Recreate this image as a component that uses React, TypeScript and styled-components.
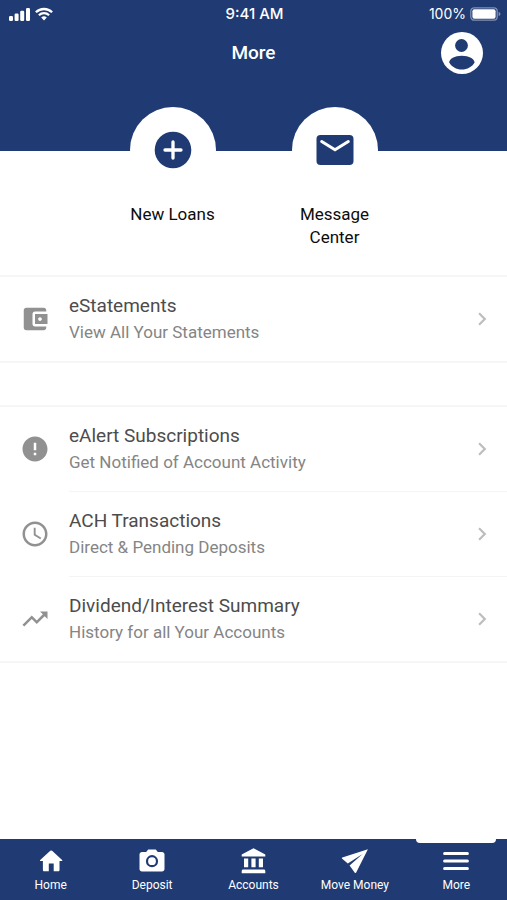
import React from "react";
import styled, { createGlobalStyle } from "styled-components";

const navy = "#203b73";

const GlobalStyle = createGlobalStyle`
  *, *::before, *::after { box-sizing: border-box; }
  body { margin: 0; background: #fff; font-family: Roboto, "Liberation Sans", sans-serif; }
  button { border: 0; padding: 0; background: none; font: inherit; color: inherit; cursor: pointer; }
  a { color: inherit; text-decoration: none; }
  h1, p { margin: 0; }
  ul { margin: 0; padding: 0; list-style: none; }
  svg { display: block; flex: none; }
`;

const Screen = styled.div`
  min-height: 100vh;
  display: flex;
  flex-direction: column;
`;

const Header = styled.header`
  background: ${navy};
  color: #fff;
  padding-bottom: 73px;
`;

const StatusBar = styled.div`
  display: grid;
  grid-template-columns: 1fr auto 1fr;
  align-items: center;
  height: 27px;
  padding: 0 6px 0 8px;
  font-family: Inter, sans-serif;
  font-size: 14px;
`;

const StatusGroup = styled.div<{ $end?: boolean }>`
  display: flex;
  align-items: center;
  gap: 4px;
  justify-content: ${(p) => (p.$end ? "flex-end" : "flex-start")};
`;

const Clock = styled.time`
  font-size: 15px;
  font-weight: 500;
`;

const TitleBar = styled.div`
  display: grid;
  grid-template-columns: 1fr auto 1fr;
  align-items: center;
  height: 51px;
  padding: 0 24px;
`;

const Title = styled.h1`
  grid-column: 2;
  font-size: 19px;
  line-height: 24px;
  font-weight: 500;
`;

const ProfileButton = styled.button`
  justify-self: end;
  border-radius: 50%;
`;

const Content = styled.main`
  flex: 1;
  padding-bottom: 24px;
`;

const Shortcuts = styled.nav`
  display: flex;
  justify-content: center;
  gap: 60px;
  margin-top: -44px;
  margin-bottom: 26px;
`;

const Shortcut = styled.a`
  width: 102px;
  display: flex;
  flex-direction: column;
  align-items: center;
  gap: 10px;
  color: #0c0c0c;
  font-size: 17px;
  line-height: 23px;
  text-align: center;
`;

const Disc = styled.span`
  display: grid;
  place-items: center;
  width: 86px;
  height: 86px;
  border-radius: 50%;
  background: #fff;
  color: ${navy};
`;

const List = styled.ul`
  border-top: 2px solid #f6f6f6;
  border-bottom: 2px solid #f6f6f6;

  & + & { margin-top: 42px; }
`;

const Row = styled.a`
  display: flex;
  align-items: center;
  padding-left: 20px;
  color: #919191;
`;

const RowBody = styled.span`
  flex: 1;
  display: flex;
  align-items: center;
  justify-content: space-between;
  margin-left: 19px;
  padding: 16px 12px 16px 0;

  li + li & { border-top: 1px solid #f4f4f4; }
`;

const RowText = styled.span`
  display: flex;
  flex-direction: column;
`;

const RowTitle = styled.span`
  font-size: 19px;
  line-height: 26px;
  color: #4c4c4c;
`;

const RowDetail = styled.span`
  font-size: 17px;
  line-height: 26px;
  color: #858585;
`;

const TabBar = styled.nav`
  display: grid;
  grid-template-columns: repeat(5, 1fr);
  background: ${navy};
  color: #fff;
`;

const Tab = styled.a`
  position: relative;
  display: flex;
  flex-direction: column;
  align-items: center;
  gap: 2px;
  padding: 8px 0 7px;
  font-size: 12px;
  line-height: 16px;

  &[aria-current="page"]::before {
    content: "";
    position: absolute;
    top: 0;
    width: 80px;
    height: 4px;
    border-radius: 0 0 4px 4px;
    background: #fff;
  }
`;

const SignalIcon = () => (
  <svg width="23" height="14" viewBox="0 0 23 14" fill="currentColor" aria-hidden="true">
    <rect x="1" y="9" width="4" height="5" rx="1.2" />
    <rect x="6.6" y="6.5" width="4" height="7.5" rx="1.2" />
    <rect x="12.2" y="3.8" width="4" height="10.2" rx="1.2" />
    <rect x="18" y="1" width="4" height="13" rx="1.2" />
  </svg>
);

const WifiIcon = () => (
  <svg width="18" height="14" viewBox="0 0 18 14" fill="none" stroke="currentColor" strokeWidth="2.3" aria-hidden="true">
    <path d="M.9 5.3a11.6 11.6 0 0 1 16.2 0" />
    <path d="M3.9 8.3a7.3 7.3 0 0 1 10.2 0" />
    <path d="M6.2 10.6a4 4 0 0 1 5.6 0L9 13.6z" fill="currentColor" stroke="none" />
  </svg>
);

const BatteryIcon = () => (
  <svg width="31" height="14" viewBox="0 0 31 14" aria-hidden="true">
    <rect x=".8" y=".8" width="26.4" height="12.4" rx="3.4" fill="none" stroke="#8290b0" strokeWidth="1.3" />
    <rect x="2.4" y="2.2" width="23.2" height="9.6" rx="2" fill="#fff" />
    <path d="M28.6 5v4c1.2-.4 1.8-1.1 1.8-2s-.6-1.6-1.8-2z" fill="#8290b0" />
  </svg>
);

const ProfileIcon = () => (
  <svg width="42" height="42" viewBox="0 0 42 42" aria-hidden="true">
    <circle cx="21" cy="21" r="21" fill="#fff" />
    <circle cx="20.5" cy="13.5" r="6.4" fill={navy} />
    <path d="M8.2 30.6C8.2 26.8 13.600 23.8 20.8 23.8s12.800 3 12.800 6.800c-2.400 4.300-7.200 7-12.800 7s-10.200-2.700-12.600-7z" fill={navy} />
  </svg>
);

const PlusIcon = () => (
  <svg width="38" height="38" viewBox="0 0 38 38" aria-hidden="true">
    <circle cx="19" cy="19" r="18.3" fill="currentColor" />
    <path d="M19 11v16M11 19h16" stroke="#fff" strokeWidth="3.3" strokeLinecap="round" />
  </svg>
);

const MailIcon = () => (
  <svg width="38" height="30" viewBox="0 0 38 30" aria-hidden="true">
    <rect x=".5" width="37" height="30" rx="4" fill="currentColor" />
    <path d="M5.700 6.500 19 14.800l13.300-8.300" fill="none" stroke="#fff" strokeWidth="3" strokeLinecap="round" />
  </svg>
);

const paths = {
  wallet:
    "M21 18v1c0 1.100-.9 2-2 2H5c-1.110 0-2-.9-2-2V5c0-1.100.89-2 2-2h14c1.100 0 2 .9 2 2v1h-9c-1.110 0-2 .9-2 2v8c0 1.100.89 2 2 2h9zm-9-2h10V8H12v8zm4-2.500c-.83 0-1.500-.67-1.500-1.500s.67-1.500 1.500-1.500 1.500.67 1.500 1.500-.67 1.500-1.500 1.500z",
  alert:
    "M12 2C6.480 2 2 6.480 2 12s4.480 10 10 10 10-4.480 10-10S17.520 2 12 2zm1 15h-2v-2h2v2zm0-4h-2V7h2v6z",
  clock:
    "M11.990 2C6.470 2 2 6.480 2 12s4.470 10 9.990 10C17.520 22 22 17.520 22 12S17.520 2 11.990 2zM12 20c-4.420 0-8-3.580-8-8s3.580-8 8-8 8 3.580 8 8-3.580 8-8 8zm.5-13H11v6l5.250 3.150.75-1.230-4.500-2.670z",
  trend:
    "M16 6l2.290 2.290-4.880 4.880-4-4L2 16.590 3.410 18l6-6 4 4 6.300-6.290L22 12V6z",
  chevron: "M8.590 16.590 13.170 12 8.590 7.410 10 6l6 6-6 6z",
};

const Glyph = ({ name, size = 30 }: { name: keyof typeof paths; size?: number }) => (
  <svg width={size} height={size} viewBox="0 0 24 24" fill="currentColor" aria-hidden="true">
    <path d={paths[name]} />
  </svg>
);

const Chevron = styled.span`
  color: #bdbdbd;
`;

const TabIcon = ({ children }: { children: React.ReactNode }) => (
  <svg width="28" height="28" viewBox="0 0 28 28" fill="currentColor" aria-hidden="true">
    {children}
  </svg>
);

const tabs = [
  {
    label: "Home",
    icon: <path d="M13.300 3.800a1.400 1.400 0 0 1 1.800 0l10 9.300c.4.500.2 1-.4 1h-2.200v8.800c0 .8-.5 1.300-1.300 1.300h-4.500v-7.600h-4.900v7.600H7.200c-.8 0-1.300-.5-1.300-1.300v-8.800H3.600c-.6 0-.8-.5-.4-1z" />,
  },
  {
    label: "Deposit",
    icon: (
      <>
        <path d="M10.200 2.500h7.600l2 2.600h4.200c1.400 0 2.500 1 2.500 2.400v14.600c0 1.400-1.100 2.400-2.500 2.400H4c-1.400 0-2.500-1-2.500-2.400V7.500C1.500 6.100 2.600 5.100 4 5.100h4.200z" />
        <circle cx="14" cy="14.2" r="5" fill="none" stroke={navy} strokeWidth="2.2" />
      </>
    ),
  },
  {
    label: "Accounts",
    icon: <path d="M14.500 1.300 26.300 7.400v2.200H2.700V7.400zM5 11.600h4.200v8.600H5zM12.400 11.600h4.200v8.600h-4.200zM19.800 11.600H24v8.600h-4.200zM4.200 22.400h20.600c.9 0 1.500.6 1.500 1.500v2.400H2.700v-2.400c0-.9.600-1.500 1.500-1.500z" />,
  },
  {
    label: "Move Money",
    icon: <path d="M26.900 2.300 1.300 10.500c-.5.200-.6.900-.1 1.300l5.600 4.700L21.600 7 8.600 18.500l5.200 7.200c.4.500 1.100.5 1.400-.1z" />,
  },
  {
    label: "More",
    icon: <path d="M2.600 6.500h22.800M2.600 14h22.800M2.600 21.500h22.800" stroke="currentColor" strokeWidth="3" strokeLinecap="round" />,
  },
];

type Item = { icon: keyof typeof paths; title: string; detail: string };

const groups: Item[][] = [
  [{ icon: "wallet", title: "eStatements", detail: "View All Your Statements" }],
  [
    { icon: "alert", title: "eAlert Subscriptions", detail: "Get Notified of Account Activity" },
    { icon: "clock", title: "ACH Transactions", detail: "Direct & Pending Deposits" },
    { icon: "trend", title: "Dividend/Interest Summary", detail: "History for all Your Accounts" },
  ],
];

export default function App() {
  return (
    <Screen>
      <GlobalStyle />
      <Header>
        <StatusBar>
          <StatusGroup>
            <SignalIcon />
            <WifiIcon />
          </StatusGroup>
          <Clock>9:41 AM</Clock>
          <StatusGroup $end>
            100%
            <BatteryIcon />
          </StatusGroup>
        </StatusBar>
        <TitleBar>
          <Title>More</Title>
          <ProfileButton type="button" aria-label="Profile">
            <ProfileIcon />
          </ProfileButton>
        </TitleBar>
      </Header>
      <Content>
        <Shortcuts aria-label="Shortcuts">
          <Shortcut href="#loans">
            <Disc>
              <PlusIcon />
            </Disc>
            New Loans
          </Shortcut>
          <Shortcut href="#messages">
            <Disc>
              <MailIcon />
            </Disc>
            Message Center
          </Shortcut>
        </Shortcuts>
        {groups.map((items) => (
          <List key={items[0].title}>
            {items.map((item) => (
              <li key={item.title}>
                <Row href={`#${item.icon}`}>
                  <Glyph name={item.icon} />
                  <RowBody>
                    <RowText>
                      <RowTitle>{item.title}</RowTitle>
                      <RowDetail>{item.detail}</RowDetail>
                    </RowText>
                    <Chevron>
                      <Glyph name="chevron" size={26} />
                    </Chevron>
                  </RowBody>
                </Row>
              </li>
            ))}
          </List>
        ))}
      </Content>
      <TabBar aria-label="Main">
        {tabs.map((tab) => (
          <Tab key={tab.label} href={`#${tab.label}`} aria-current={tab.label === "More" ? "page" : undefined}>
            <TabIcon>{tab.icon}</TabIcon>
            {tab.label}
          </Tab>
        ))}
      </TabBar>
    </Screen>
  );
}
